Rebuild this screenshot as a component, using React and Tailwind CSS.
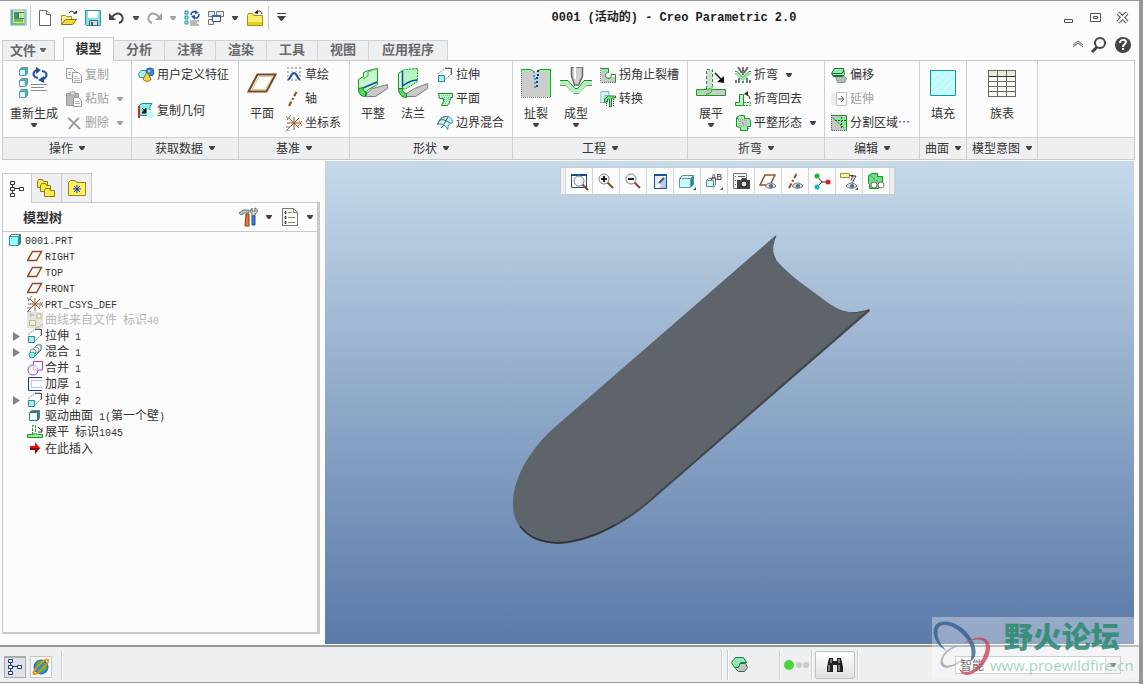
import React from 'react';

const Svg = ({ size = 16, children, className = "" }) => (
  <svg width={size} height={size} viewBox={`0 0 ${size} ${size}`} fill="none" aria-hidden="true" className={`shrink-0 ${className}`}>
    {children}
  </svg>
);

const Caret = ({ className = "text-[#454545]" }) => (
  <svg width="6" height="4" viewBox="0 0 6 4" aria-hidden="true" className={`shrink-0 ${className}`}>
    <path d="M0 0h6v1L4 4H2L0 1z" fill="currentColor" />
  </svg>
);

/* quick access icons */

const AppIcon = () => (
  <Svg size={17}>
    <path d="M0 0h17v17H0z" fill="#a7d5ee" />
    <path d="M1 1h2v15H1z" fill="#67a9c9" />
    <path d="M3 14h12v2H3z" fill="#74c65d" />
    <path d="M14 2h2v13h-2z" fill="#8fc7dc" />
    <path d="M3 2h11v12H3z" fill="#e9e45c" />
    <path d="M4 3h4v10H4z" fill="#3a9a6b" />
    <path d="M4 10h9v3H4z" fill="#6cc04f" />
    <path d="M7 3h7v7H7z" fill="#3a7b9d" />
    <path d="M9 4h5v5H9z" fill="#d5e871" />
  </Svg>
);

const NewIcon = () => (
  <Svg>
    <path d="M2.500.5h7l4 4v11h-11z" fill="#fff" stroke="#6a6a6a" />
    <path d="M9.500.5v4h4" fill="#e8e8e8" stroke="#6a6a6a" />
  </Svg>
);

const OpenIcon = () => (
  <Svg>
    <path d="M.5 14.500V5.500h4l1 1h5v3" fill="#fff3a0" stroke="#b08a1a" />
    <path d="M.5 14.500l4-5h11l-4 5z" fill="#f3d93c" stroke="#8f7012" />
    <path d="M8 3c2-3 5-2 6 1" stroke="#222" />
    <path d="M12 3.500h4v-3z" fill="#222" />
  </Svg>
);

const SaveIcon = () => (
  <Svg>
    <path d="M.5.5h15v15h-14l-1-1z" fill="#7de3ea" stroke="#3b8b98" />
    <path d="M3 1h10v7H3z" fill="#fff" />
    <path d="M4.500 10.500h8v5h-8z" fill="#d8dde0" stroke="#3f6d78" />
    <path d="M6 12h2v3H6z" fill="#3a5d68" />
  </Svg>
);

const UndoIcon = () => (
  <Svg>
    <path d="M3 7c3-4 8-5 10-1 2 3 0 6-3 7" stroke="currentColor" strokeWidth="2" />
    <path d="M0 3v7h7z" fill="currentColor" />
  </Svg>
);

const RegenIcon = () => (
  <Svg>
    <path d="M1 1h3v3H1zM1 6h3v3H1zM1 11h3v3H1z" fill="#aef5f5" stroke="#149a9a" />
    <path d="M6 11h9M6 13h7M6 15h9" stroke="#777" />
    <path d="M7 5c0-3 3-4 5-3M15 4c0 4-3 5-6 3" stroke="#1d50a8" strokeWidth="1.500" />
    <path d="M11 0l4 3-4 1zM11 5l-4 1 4 4z" fill="#1d50a8" />
  </Svg>
);

const WindowsIcon = () => (
  <Svg>
    <path d="M.5 1.500h6v5h-6zM8.500 1.500h7v5h-7zM.5 9.500h5v5h-5z" fill="#ececec" stroke="#777" />
    <path d="M4.500 5.500h8v6h-8z" fill="#fff" stroke="#244e99" />
    <path d="M4 5h9v2H4z" fill="#2e67bd" />
  </Svg>
);

const CloseFolderIcon = () => (
  <Svg>
    <path d="M.5 15.500v-10l1-2h4l1 2h9v10z" fill="#fdee67" stroke="#a88e17" />
    <path d="M1 12h14v3H1z" fill="#e9ca28" />
    <path d="M9 2c3-2 5-1 6 2" stroke="#222" />
    <path d="M7 3l4-3v4z" fill="#222" />
  </Svg>
);

/* large ribbon icons */

const cube = (x, y) => (
  <g key={`${x}-${y}`}>
    <path d={`M${x} ${y + 2}l2-2h6v6l-2 2z`} fill="#29c5c5" stroke="#7d8c8c" />
    <path d={`M${x} ${y + 2}h6v6H${x}z`} fill="#d3fbfb" stroke="#5a9a9a" />
  </g>
);

const BigRegen = () => (
  <Svg size={32}>
    {[0, 11, 22].map((y) => cube(1.5, y + 0.5))}
    <path d="M13 17.500h16M13 20.500h13M13 23.500h16" stroke="#8b8b8b" />
    <path d="M20 11c-6-1-6-7 0-8M24 4c6 1 6 6 0 9" stroke="#1d4e9e" strokeWidth="2" />
    <path d="M18 0l5 3-5 4zM26 9l-6 4 6 3z" fill="#1d4e9e" />
  </Svg>
);

const BigPlane = () => (
  <Svg size={32}>
    <path d="M11.500 7.500h18l-9 17h-18z" fill="#fdfdfd" stroke="#7a4520" strokeWidth="2" />
    <path d="M13 9.500h13.500l-7 13H6z" stroke="#d6c88e" />
  </Svg>
);

const BigFlat = () => (
  <Svg size={32}>
    <path d="M9.500 26.500l6-5 15-4v4l-12 8h-9z" fill="#c9c9c9" stroke="#7d7d7d" />
    <path d="M1.500 12.500l5-3V5.500l5-2 9-2v16l-9 5c-2 1-2 3-2 5h-3c-3-1-5-5-5-8z" fill="#c5f7cf" stroke="#129a1e" />
    <path d="M6 12l5-3V5l7-3" stroke="#40b34a" />
    <path d="M6 21l14-6" stroke="#1747a6" strokeWidth="1.500" />
    <path d="M1.500 21.500c0 5 2 8 7 8v-5c-2 0-3-2-2-4z" fill="#5ad768" stroke="#0d8a18" />
  </Svg>
);

const BigFlange = () => (
  <Svg size={32}>
    <path d="M9.500 26.500l8-5 13-5v5l-12 8h-9z" fill="#c9c9c9" stroke="#7d7d7d" />
    <path d="M1.500 6.500l6-4 13-1v13l-11 7-8 1z" fill="#b4f4c0" stroke="#129a1e" strokeDasharray="2 1" />
    <path d="M1.500 6.500l4-3v18h-4z" fill="#d5f9dc" stroke="#129a1e" />
    <path d="M5.500 4v15c4-3 9-6 15-6" stroke="#1747a6" strokeWidth="1.500" />
    <path d="M1.500 21.500h4c0 3 1 4 4 5v4c-5 0-8-4-8-9z" fill="#5ad768" stroke="#0d8a18" />
  </Svg>
);

const BigRip = () => (
  <Svg size={32}>
    <path d="M1 2h11l3 4 3-4h13v28H1z" fill="#cccccc" />
    <path d="M1 4h10M20 4h9v26" stroke="#a6eaae" strokeWidth="2" />
    <path d="M1 2.500h10l2 2M31 2.500H20l-2 2M30.500 2v28" stroke="#17a41f" />
    <path d="M1.500 4v26.500H30" stroke="#777" strokeDasharray="1 1" />
    <path d="M18 3v6h-1v13" stroke="#163e9c" strokeWidth="2" strokeDasharray="2 2" />
    <path d="M14 4v6h1v12" stroke="#35aab5" strokeWidth="2" strokeDasharray="2 2" />
  </Svg>
);

const BigForm = () => (
  <Svg size={32}>
    <path d="M0 18.500h6l8 8h5l7-8h6" stroke="#888" />
    <path d="M0 16h7l7 8h5l6-8h7" stroke="#b2f0bd" strokeWidth="4" />
    <path d="M0 13.500h8l7 8h3l6-8h8" stroke="#128f1b" />
    <path d="M11.500 0v9l3 9h4l4-9V0z" fill="#cfcfcf" stroke="#666" strokeWidth="1.500" />
    <path d="M15 0v12" stroke="#fff" strokeWidth="2" />
  </Svg>
);

const BigUnbend = () => (
  <Svg size={32}>
    <path d="M11.500 22V2.500h6V22" fill="#d8d8d8" stroke="#159d1d" strokeDasharray="3 2" />
    <path d="M1.500 22.500h10l5-1 1 1h13v6h-29z" fill="#cbcbcb" stroke="#159d1d" />
    <path d="M2 24.500h9c4 0 6-2 6-5" stroke="#8be595" strokeWidth="2" />
    <path d="M11 27c4 0 6-2 6-5" stroke="#159d1d" />
    <path d="M20 6l7 7" stroke="#111" strokeWidth="1.500" />
    <path d="M29 16v-7l-7 6z" fill="#111" />
  </Svg>
);

const BigFill = () => (
  <Svg size={32}>
    <path d="M3.500 3.500h25v25h-25z" fill="#bdfbfb" stroke="#11989f" />
    <path d="M5 12l8-8M5 20L21 4M5 27L28 5M12 28l16-16M20 28l8-8" stroke="#eaffff" />
  </Svg>
);

const BigTable = () => (
  <Svg size={32}>
    <path d="M2.500 3.500h27v26h-27z" fill="#fafaf2" stroke="#333" />
    <path d="M2 4h28v5H2z" fill="#e9e9d8" />
    <path d="M2.500 3.500h27v26h-27zM11.500 4v26M20.500 4v26M3 14.500h27M3 19.500h27M3 24.500h27" stroke="#686868" />
    <path d="M3 9.500h27" stroke="#333" />
  </Svg>
);

/* small ribbon icons */

const CopyIcon = () => (
  <Svg>
    <path d="M.5 1.500h6l3 3v7h-9z" fill="#f4f4f4" stroke="#a4a4a4" />
    <path d="M6.500 5.500h6l3 3v7h-9z" fill="#fff" stroke="#9a9a9a" />
    <path d="M8 9.500h4M8 11.500h6M8 13.500h6M2 5.500h3M2 7.500h3" stroke="#b5b5b5" />
  </Svg>
);

const PasteIcon = () => (
  <Svg>
    <path d="M.5 2.500h12v12H.5z" fill="#b9b9b9" stroke="#999" />
    <path d="M4 1h5v3H4z" fill="#e5e5e5" stroke="#999" />
    <path d="M7.500 6.500h5l3 3v6h-8z" fill="#fff" stroke="#9a9a9a" />
    <path d="M9 10.500h4M9 12.500h5" stroke="#b5b5b5" />
  </Svg>
);

const DeleteIcon = () => (
  <Svg>
    <path d="M2 3c4 3 8 7 12 11M13 3C9 6 6 10 3 14" stroke="#9b9b9b" strokeWidth="2" />
  </Svg>
);

const UdfIcon = () => (
  <Svg>
    <path d="M.5 6.500l3-3h6v5l-2 2h-6z" fill="#b1f2ea" stroke="#2a9d94" />
    <circle cx="12" cy="5" r="4" fill="#3c86dd" stroke="#1f5cad" />
    <circle cx="11" cy="4" r="1" fill="#d8ecff" />
    <path d="M9 5l4 7c0 3-7 3-8 0z" fill="#f3d550" stroke="#8e701a" />
  </Svg>
);

const CopyGeomIcon = () => (
  <Svg>
    <path d="M1 2.500l3-2h10l-2 3v9H1z" fill="#7ff0ee" stroke="#208e8e" />
    <path d="M0 3h2v12H0z" fill="#d32a20" />
    <path d="M4 5l4 4M8 5v5H4z" fill="#111" stroke="#111" />
    <path d="M9.500 7.500h6v8h-6z" fill="#baffff" stroke="#fff" />
  </Svg>
);

const SketchIcon = () => (
  <Svg>
    <path d="M1 1h15M1 5h15M1 9h15M1 13h15" stroke="#b5b5b5" strokeWidth="2" strokeDasharray="2 2" />
    <path d="M2 13c3-2 3-7 6-7s3 5 6 7" stroke="#fcfcfc" strokeWidth="4" />
    <path d="M2 13c3-2 3-7 6-7s3 5 6 7" stroke="#164f9e" strokeWidth="2" />
  </Svg>
);

const AxisIcon = () => (
  <Svg>
    <path d="M3 15L11 0" stroke="#8d4617" strokeWidth="2" strokeDasharray="5 2 2 2" />
  </Svg>
);

const CsysIcon = () => (
  <Svg>
    <path d="M8 2v13M1 8h12M3 3l10 10M13 3L3 13" stroke="#a0531e" />
    <path d="M0 1l2 3M5 0L1 5M13 6l3 5M16 6l-4 5M0 12h4l-4 4h4" stroke="#777" />
  </Svg>
);

const ExtrudeIcon = () => (
  <Svg>
    <path d="M1 7l7-6h6v6l-7 7" fill="#fff" stroke="#8a8a8a" strokeDasharray="2 1" />
    <path d="M8 1.500h6.500v6" stroke="#555" />
    <path d="M1.500 8.500h6v6h-6z" fill="#9ff5f5" stroke="#3a8189" />
  </Svg>
);

const GreenPlaneIcon = () => (
  <Svg>
    <path d="M1.500 2.500h14v4h-2l-1 5-2 3h-6l2-4v-3h-4z" fill="#c5f5cf" stroke="#108b1c" />
    <path d="M4 4.500h10M5 6.500h8M7 8.500h5M7 10.500h4M6 12.500h4" stroke="#5dc972" strokeDasharray="1 1" />
  </Svg>
);

const BlendIcon = () => (
  <Svg>
    <path d="M.5 9.500C2 5 5 2 8 1.500c4-1 7 2 7.500 6C12 8 11 11 10.500 14.500 9 11 6 8 .5 9.500z" fill="#bef7f7" stroke="#3292a5" />
    <path d="M3 5c4-1 7 1 10 3M7 9l4-7M.5 9.500C2 5 5 2 8 1.500M4 13l3-3" stroke="#555" />
  </Svg>
);

const CornerReliefIcon = () => (
  <Svg>
    <path d="M1 1h8v4c-4 0-4 5 0 5h7v6H1z" fill="#c8c8c8" />
    <path d="M2 3h5" stroke="#8ae89b" strokeWidth="2" />
    <path d="M0 1.500h8.500v4M9 5.500c-5 0-5 6 0 6 3 0 2-4 2-4h4.500v8" stroke="#129a1e" />
    <path d="M.5 3v12.500H15" stroke="#777" strokeDasharray="1 1" />
  </Svg>
);

const ConvertIcon = () => (
  <Svg>
    <path d="M0 1.500l2-1h7v4H5v7H0z" fill="#c5f7f8" stroke="#9aa9a9" />
    <path d="M4.500 11V8l4-3h7v2h-4v9h-2V8h-2v3z" fill="#8fe59a" stroke="#108b1c" />
    <path d="M6.500 10v5M13.500 8v7" stroke="#1e3f9c" strokeDasharray="1 1" />
  </Svg>
);

const BendIcon = () => (
  <Svg>
    <path d="M3 0l4 6M13 0L9 6" stroke="#666" strokeWidth="2" />
    <path d="M0 4.500h2l6 6 6-6h2" stroke="#129a1e" />
    <path d="M0 7h2l6 6 6-6h2" stroke="#8ee29a" strokeWidth="2" />
    <path d="M1 13v3M4 11v5M8 0v8M8 14v2M12 11v5M15 13v3" stroke="#777" strokeWidth="2" />
  </Svg>
);

const BendBackIcon = () => (
  <Svg>
    <path d="M4.500 3.500h4v11h-8v-3h4z" fill="#bdf0c4" stroke="#129a1e" />
    <path d="M9 11.500h6.500v3H9" stroke="#129a1e" strokeDasharray="2 1" />
    <path d="M11 3c2 0 3 2 4 5" stroke="#222" />
    <path d="M9 3l4-3v5z" fill="#222" />
  </Svg>
);

const FlatPatternIcon = () => (
  <Svg>
    <path d="M1.500 2.500l3-2h5v3h5l1 3v5h-3v4h-7v-3l-4-1z" fill="#a9e8b0" stroke="#129a1e" />
    <path d="M5 5h6v6H5z" fill="#cfcfcf" stroke="#888" strokeDasharray="1 1" />
    <path d="M2 3l12 11" stroke="#1747a6" strokeDasharray="2 5" />
  </Svg>
);

const OffsetIcon = () => (
  <Svg>
    <path d="M4.500 9.500h9l2 2-2 4h-7z" fill="#b9b9b9" stroke="#6fa57a" />
    <path d="M3.500 1.500h9l1 6-2 2h-9l-2-3z" fill="#9fecb1" stroke="#10762a" />
    <path d="M1 6.500h10l2-4M2 8.500h10" stroke="#10762a" />
  </Svg>
);

const ExtendIcon = () => (
  <Svg>
    <path d="M0 2h6v12H0z" fill="#ececec" />
    <path d="M5.500 1.500h10v13h-10z" fill="#fff" stroke="#c0c0c0" />
    <path d="M7 8h6M10 5l3 3-3 3" stroke="#5a5a5a" />
  </Svg>
);

const SplitIcon = () => (
  <Svg>
    <path d="M0 0h16v16H0z" fill="#c6c6c6" />
    <path d="M3 3h12v12z" fill="#8fe59a" />
    <path d="M0 .5h15.500V16" stroke="#129a1e" />
    <path d="M2 3l11 10M4 5.500h11M10.500 2v12" stroke="#11711a" strokeDasharray="2 1" />
    <path d="M.5 2v13.500H14" stroke="#666" strokeDasharray="1 1" />
  </Svg>
);

/* model tree icons */

const SmallPlane = () => (
  <Svg><path d="M5.500 3.500h9l-5 9h-9z" fill="#fff" stroke="#8d4a1c" strokeWidth="1.500" /></Svg>
);

const PartIcon = () => (
  <Svg size={14}>
    <path d="M1.500 3.500l2-2h9v9l-2 2" fill="#128a92" stroke="#577" />
    <path d="M1.500 3.500l2-2h9l-2 2z" fill="#fff" stroke="#577" />
    <path d="M1.500 3.500h9v9h-9z" fill="#95fbfb" stroke="#2d9aa0" />
  </Svg>
);

const CurveFileIcon = () => (
  <Svg>
    <path d="M0 0h16v16H0z" fill="#e2e2df" />
    <path d="M2.500 8.500h6v5h-6zM10 2h4v4h-4zM2 3h5M4 1v4M8 15h4l4-3" fill="#f7f4dc" stroke="#b9b6a0" />
  </Svg>
);

const TreeBlend = () => (
  <Svg>
    <path d="M8 3l2-2h4v5l-6 6" fill="#fff" stroke="#2d7f86" />
    <circle cx="9" cy="6" r="3" fill="#fff" stroke="#888" />
    <circle cx="6" cy="8" r="3" fill="#fff" stroke="#888" />
    <circle cx="5" cy="11" r="3" fill="#8df6f8" stroke="#2e99a0" />
  </Svg>
);

const MergeIcon = () => (
  <Svg>
    <path d="M6.500 5V1.500h9v8.500H11" stroke="#a33fe0" />
    <path d="M6.500 5v5H11c0-3-2-5-4.500-5z" fill="#f5ecfc" stroke="#d3b6f0" />
    <path d="M6.500 5C3 5 1 7 1 10s2 5 5 5 5-2 5-5" stroke="#a33fe0" />
  </Svg>
);

const ThickenIcon = () => (
  <Svg>
    <path d="M15 1.500H1.500v13H15" stroke="#123c94" />
    <path d="M15 4.500H4.500v7H15" stroke="#bcbcf4" />
  </Svg>
);

const SurfaceIcon = () => (
  <Svg>
    <path d="M2.500 4.500l2-2h8v8l-2 2" fill="#128a92" stroke="#777" />
    <path d="M2.500 4.500h8v8h-8z" fill="#efffff" stroke="#3b7c80" />
  </Svg>
);

const TreeUnbend = () => (
  <Svg>
    <path d="M5.500 11V1.500h3V11" fill="#fff" stroke="#129a1e" strokeDasharray="3 1" />
    <path d="M.5 10.500h5l3-1 2 1h5v3H.5z" fill="#9fe3a8" stroke="#129a1e" />
    <path d="M11 3l4 4M15 4v4h-4" stroke="#444" />
  </Svg>
);

const InsertArrow = () => (
  <Svg>
    <path d="M3 6h5V2l5 6-5 6v-4H3z" fill="#e90c0c" />
    <path d="M3 8h10l-5 6v-4H3z" fill="#950505" />
  </Svg>
);

const TreeTabIcon = ({ color = "#333", fill = "#fff" }) => (
  <Svg>
    <path d="M3.500 3v11M4 7.500h8" stroke={color} />
    <path d="M1.500.5h4v3h-4zM1.500 6.500h4v3h-4zM1.500 12.500h4v3h-4zM10.500 6.500h4v3h-4z" fill={fill} stroke={color} />
  </Svg>
);

const FolderShape = ({ x, y }) => (
  <path d={`M${x}.5 ${y + 8}.5v-6l1-2h4l1 2h4v6z`} fill="#fbea4c" stroke="#8f7912" />
);

const FoldersIcon = () => (
  <Svg size={19}>
    <FolderShape x={0} y={0} />
    <FolderShape x={3} y={4} />
    <FolderShape x={7} y={9} />
  </Svg>
);

const FavoriteFolder = () => (
  <Svg size={18}>
    <path d="M.5 16.500V3.500l2-2h5l1 2h9v13z" fill="#fdf069" stroke="#9d8616" />
    <path d="M9 6v8M5 10h8M6 7l6 6M12 7l-6 6" stroke="#12359b" />
  </Svg>
);

const ToolsIcon = () => (
  <Svg size={20}>
    <path d="M0 6l4-3h6v3H6L2 8z" fill="#b3c3c3" stroke="#6a7d7d" />
    <path d="M7 7h3v12H6z" fill="#e57928" stroke="#8a3c10" />
    <path d="M11 4l2-3v3h3V1c3 1 3 5 0 6v2h-3V7z" fill="#d5d5d5" stroke="#666" />
    <path d="M13 9h3v9h-3z" fill="#3c7fe0" stroke="#23519b" />
  </Svg>
);

const ListIcon = () => (
  <Svg size={18}>
    <path d="M1.500.5h11l4 4v13h-15z" fill="#fffdf1" stroke="#777" />
    <path d="M12.500.5v4h4M7 4.500h4M7 9.500h7M7 14.500h7" stroke="#888" />
    <path d="M4 3.500h1v2H4zM4 8.500h1v2H4zM4 13.500h1v2H4z" stroke="#333" />
  </Svg>
);

/* view toolbar icons */

const Lens = ({ cx, cy, sign }) => (
  <g>
    <path d={`M${cx + 3} ${cy + 3}l6 6`} stroke="#7a4a35" strokeWidth="2" />
    <circle cx={cx} cy={cy} r="5" fill="#f5f9fb" stroke="#7e8588" />
    {sign && <path d={sign} stroke="#222" strokeWidth="2" />}
  </g>
);

const Eye = () => (
  <g>
    <path d="M6 14c3-4 8-4 11 0-3 3-8 3-11 0z" fill="#d8d8d8" stroke="#777" />
    <circle cx="12" cy="14" r="2" fill="#496c92" />
  </g>
);

const Flyout = () => <path d="M18 15v3h-3z" fill="#555" />;

const viewTools = [
  { label: "重新调整", icon: <><path d="M1.500 2.500h15v13h-15z" fill="#fff" stroke="#1d4793" /><path d="M1 3h16" stroke="#1d4793" strokeWidth="2" /><Lens cx={9} cy={9} /></> },
  { label: "放大", icon: <Lens cx={7} cy={7} sign="M4 7h6M7 4v6" /> },
  { label: "缩小", icon: <Lens cx={7} cy={7} sign="M4 7h6" /> },
  { label: "重画", icon: <><path d="M3.500 2.500h12v14h-12z" fill="#e4f0fc" stroke="#1d4fa5" /><path d="M3 3h13" stroke="#1d4fa5" strokeWidth="2" /><path d="M5 12l10-7v11H5z" fill="#b7cdea" /><path d="M8 11l5-5" stroke="#555" strokeWidth="2" /><path d="M5 13l3-2 2 2-2 3H5z" fill="#fff" /></> },
  { label: "显示样式", icon: <><path d="M1.500 6.500l3-3h11v9l-3 3" fill="#0f98a0" stroke="#688" /><path d="M1.500 6.500l3-3h11l-3 3z" fill="#e7ffff" stroke="#689" /><path d="M1.500 6.500h11v9h-11z" fill="#caffff" stroke="#6a9ba0" /><Flyout /></> },
  { label: "已保存方向", icon: <><path d="M1.500 8.500l2-2h7v6l-2 3" fill="#fff" stroke="#777" /><path d="M1.500 8.500h7v6h-7z" fill="#e5ffff" stroke="#379aa0" /><text x="6" y="8" fontSize="9" fontFamily="Liberation Mono, monospace" fill="#222">AB</text><Flyout /></> },
  { label: "视图管理器", icon: <><path d="M1.500 1.500h13v15h-13z" fill="#f4f4f4" stroke="#777" /><path d="M3 4.500h1M6 4.500h7M3 8.500h1M3 12.500h1" stroke="#555" /><path d="M5 8h4l1-2h4l1 2h3v9H5z" fill="#444" /><circle cx="12" cy="12" r="3" fill="#ddd" stroke="#111" /></> },
  { label: "平面显示", icon: <><path d="M6 3h10l-5 10H1z" fill="#fff" stroke="#91502c" strokeWidth="1.500" /><Eye /></> },
  { label: "轴显示", icon: <><path d="M3 16L11 1" stroke="#91502c" strokeWidth="2" strokeDasharray="5 2 2 2" /><Eye /></> },
  { label: "坐标系显示", icon: <><path d="M4 4l5 6h6M9 10l-5 5" stroke="#333" /><circle cx="4" cy="4" r="2.500" fill="#16ba22" /><circle cx="15" cy="10" r="2.500" fill="#e31d1d" /><circle cx="4" cy="15" r="2.500" fill="#13b9c6" /></> },
  { label: "注释显示", icon: <><path d="M.5 1.500h9v4h-9z" fill="#fbf596" stroke="#96903f" /><path d="M10 3.500h3l-2 5M11 4h5l-4 7" stroke="#333" /><Eye /><Flyout /></> },
  { label: "平整形态预览", icon: <><path d="M1.500 3.500l3-2h6v3h5v8h-4v4h-9v-4l-1-1z" fill="#6fda85" stroke="#129a1e" /><path d="M3 3l12 11" stroke="#2d7042" strokeDasharray="1 1" /><circle cx="7" cy="13" r="3" fill="#fff" stroke="#777" /><circle cx="14" cy="13" r="3" fill="#fff" stroke="#777" /></> },
];

const ribbon = [
  {
    title: "操作",
    width: "w-[129px]",
    large: [{ label: "重新生成", icon: <BigRegen />, menu: true, wide: true }],
    small: [
      { label: "复制", icon: <CopyIcon />, disabled: true },
      { label: "粘贴", icon: <PasteIcon />, disabled: true, menu: true },
      { label: "删除", icon: <DeleteIcon />, disabled: true, menu: true },
    ],
  },
  {
    title: "获取数据",
    width: "w-[107px]",
    roomy: true,
    small: [
      { label: "用户定义特征", icon: <UdfIcon /> },
      { label: "复制几何", icon: <CopyGeomIcon /> },
    ],
  },
  {
    title: "基准",
    width: "w-[111px]",
    large: [{ label: "平面", icon: <BigPlane /> }],
    small: [
      { label: "草绘", icon: <SketchIcon /> },
      { label: "轴", icon: <AxisIcon /> },
      { label: "坐标系", icon: <CsysIcon /> },
    ],
  },
  {
    title: "形状",
    width: "w-[163px]",
    large: [{ label: "平整", icon: <BigFlat /> }, { label: "法兰", icon: <BigFlange /> }],
    small: [
      { label: "拉伸", icon: <ExtrudeIcon /> },
      { label: "平面", icon: <GreenPlaneIcon /> },
      { label: "边界混合", icon: <BlendIcon /> },
    ],
  },
  {
    title: "工程",
    width: "w-[175px]",
    large: [{ label: "扯裂", icon: <BigRip />, menu: true }, { label: "成型", icon: <BigForm />, menu: true }],
    small: [
      { label: "拐角止裂槽", icon: <CornerReliefIcon /> },
      { label: "转换", icon: <ConvertIcon /> },
    ],
  },
  {
    title: "折弯",
    width: "w-[137px]",
    large: [{ label: "展平", icon: <BigUnbend />, menu: true }],
    small: [
      { label: "折弯", icon: <BendIcon />, menu: true },
      { label: "折弯回去", icon: <BendBackIcon /> },
      { label: "平整形态", icon: <FlatPatternIcon />, menu: true },
    ],
  },
  {
    title: "编辑",
    width: "w-[95px]",
    small: [
      { label: "偏移", icon: <OffsetIcon /> },
      { label: "延伸", icon: <ExtendIcon />, disabled: true },
      { label: "分割区域⋯", icon: <SplitIcon /> },
    ],
  },
  { title: "曲面", width: "w-[47px]", large: [{ label: "填充", icon: <BigFill /> }] },
  { title: "模型意图", width: "w-[71px]", centered: true, large: [{ label: "族表", icon: <BigTable /> }] },
];

const tree = [
  { label: "RIGHT", icon: <SmallPlane /> },
  { label: "TOP", icon: <SmallPlane /> },
  { label: "FRONT", icon: <SmallPlane /> },
  { label: "PRT_CSYS_DEF", icon: <CsysIcon /> },
  { label: "曲线来自文件 标识40", icon: <CurveFileIcon />, muted: true },
  { label: "拉伸 1", icon: <ExtrudeIcon />, expandable: true },
  { label: "混合 1", icon: <TreeBlend />, expandable: true },
  { label: "合并 1", icon: <MergeIcon /> },
  { label: "加厚 1", icon: <ThickenIcon /> },
  { label: "拉伸 2", icon: <ExtrudeIcon />, expandable: true },
  { label: "驱动曲面 1(第一个壁)", icon: <SurfaceIcon /> },
  { label: "展平 标识1045", icon: <TreeUnbend /> },
  { label: "在此插入", icon: <InsertArrow /> },
];

const LargeButton = ({ label, icon, menu, wide }) => (
  <button className={`flex shrink-0 flex-col items-center pt-1 ${wide ? "w-14" : "w-10"}`}>
    {icon}
    <span className="mt-[6px] h-4 leading-4 whitespace-nowrap">{label}</span>
    {menu && <Caret className="mt-[2px] text-[#454545]" />}
  </button>
);

const SmallButton = ({ label, icon, menu, disabled }) => (
  <button disabled={disabled} className="flex h-6 items-center gap-[3px] pb-px whitespace-nowrap disabled:text-[#a0a0a0]">
    {icon}
    <span className="pb-px">{label}</span>
    {menu && <Caret className={disabled ? "ml-[5px] text-[#a0a0a0]" : "ml-[5px] text-[#454545]"} />}
  </button>
);

const RibbonGroup = ({ title, width, large = [], small = [], roomy, centered }) => (
  <section className={`flex shrink-0 flex-col border-r border-[#cdd0d3] ${width}`}>
    <div className={`flex h-[77px] pt-[2px] ${centered ? "justify-center" : "pl-[3px]"}`}>
      {large.map((item) => <LargeButton key={item.label} {...item} />)}
      {small.length > 0 && (
        <div className={`flex flex-col ${large.length ? "ml-1" : "ml-[3px]"} ${roomy ? "gap-3" : ""}`}>
          {small.map((item) => <SmallButton key={item.label} {...item} />)}
        </div>
      )}
    </div>
    <button className="flex h-[22px] items-center justify-center gap-[6px] border-t border-[#cdd0d3] bg-[#eeeff1] pb-[2px] whitespace-nowrap">
      {title}
      <Caret />
    </button>
  </section>
);

// Latin runs are set in the narrower monospaced face
const MixedText = ({ text }) => (
  <span className="whitespace-pre">
    {text.split(/([\x20-\x7e]+)/).filter(Boolean).map((part, i) =>
      /^[\x20-\x7e]/.test(part)
        ? <span key={i} className="font-['Liberation_Mono',monospace] text-[10px]">{part}</span>
        : part
    )}
  </span>
);

const ToolButton = ({ label, children, className = "w-6" }) => (
  <button aria-label={label} className={`flex h-6 shrink-0 items-center justify-center ${className}`}>{children}</button>
);

const TitleBar = () => (
  <header className="flex h-[33px] items-center pl-[6px]">
    <ToolButton label="Creo"><AppIcon /></ToolButton>
    <span className="mr-[2px] h-6 w-px bg-[#c9c9c9]" />
    <ToolButton label="新建"><NewIcon /></ToolButton>
    <ToolButton label="打开"><OpenIcon /></ToolButton>
    <ToolButton label="保存"><SaveIcon /></ToolButton>
    <ToolButton label="撤消" className="w-6 text-[#444]"><UndoIcon /></ToolButton>
    <ToolButton label="撤消列表" className="w-[14px]"><Caret /></ToolButton>
    <ToolButton label="重做" className="w-[22px] text-[#a3a3a3]"><span className="-scale-x-100"><UndoIcon /></span></ToolButton>
    <ToolButton label="重做列表" className="w-4"><Caret className="text-[#a3a3a3]" /></ToolButton>
    <ToolButton label="重新生成" className="w-[22px]"><RegenIcon /></ToolButton>
    <ToolButton label="窗口" className="w-[26px]"><WindowsIcon /></ToolButton>
    <ToolButton label="窗口列表" className="w-3"><Caret /></ToolButton>
    <ToolButton label="关闭" className="w-[27px]"><CloseFolderIcon /></ToolButton>
    <span className="h-6 w-px bg-[#c9c9c9]" />
    <ToolButton label="自定义">
      <svg width="9" height="9" viewBox="0 0 9 9" aria-hidden="true"><path d="M0 0h9v1H0zM0 3h9L5 8H4z" fill="#444" /></svg>
    </ToolButton>
    <h1 className="flex-1 text-center font-['Liberation_Mono','Noto_Sans_CJK_SC',monospace] text-xs font-bold text-[#222]">
      0001 (活动的) - Creo Parametric 2.0
    </h1>
    <div className="flex pr-[3px]">
      <ToolButton label="最小化" className="w-[27px]">
        <Svg><path d="M3.500 9.500h8v3h-8z" stroke="#555" /></Svg>
      </ToolButton>
      <ToolButton label="还原" className="w-[27px]">
        <Svg><path d="M2.500 3.500h10v8h-10zM5.500 6.500h4v2h-4z" stroke="#555" /></Svg>
      </ToolButton>
      <ToolButton label="关闭窗口" className="w-[27px]">
        <Svg>
          <path d="M3 3l9 9M12 3l-9 9" stroke="#555" strokeWidth="4" />
          <path d="M3 3l9 9M12 3l-9 9" stroke="#fcfcfc" strokeWidth="2" />
        </Svg>
      </ToolButton>
    </div>
  </header>
);

const tabs = ["分析", "注释", "渲染", "工具", "视图", "应用程序"];

const TabBar = () => (
  <nav className="flex h-[26px] items-end pl-[2px] text-[13px] font-bold text-[#68696d]">
    <button className="flex h-[20px] w-[53px] items-center gap-1 border border-b-0 border-[#c6cacd] bg-[#eeeff1] pb-[2px] pl-[7px]">
      文件 <Caret className="text-[#68696d]" />
    </button>
    <button className="z-10 -mb-px ml-2 h-[24px] w-[51px] border border-b-0 border-[#c6cacd] bg-[#fcfcfc] pb-1 leading-4 text-[#333]">模型</button>
    {tabs.map((tab) => (
      <button key={tab} className="h-[20px] min-w-[51px] border-t border-r border-[#d0d3d6] bg-[#eeeff1] px-3 pb-1 leading-4 last-of-type:px-[13px]">{tab}</button>
    ))}
    <div className="mr-1 ml-auto flex items-center self-center pb-1">
      <ToolButton label="最小化功能区" className="w-[18px]">
        <Svg><path d="M3 8l5-4 5 4M3 10l5-4 5 4" stroke="#555" /></Svg>
      </ToolButton>
      <ToolButton label="搜索">
        <Svg>
          <path d="M1 15l5-5" stroke="#444" strokeWidth="3" />
          <circle cx="9" cy="6" r="5" fill="#fcfcfc" stroke="#444" strokeWidth="2" />
        </Svg>
      </ToolButton>
      <ToolButton label="帮助">
        <Svg>
          <circle cx="8" cy="8" r="8" fill="#444" />
          <path d="M5 6c0-4 6-4 6-1 0 2-3 2-3 5" stroke="#fff" strokeWidth="2" />
          <path d="M7 11h2v2H7z" fill="#fff" />
        </Svg>
      </ToolButton>
    </div>
  </nav>
);

const ModelTree = () => (
  <aside className="mt-3 mb-[11px] ml-[2px] flex w-[318px] shrink-0 flex-col">
    <div className="flex h-[29px]">
      <button aria-label="模型树" className="z-10 -mb-px flex w-[30px] items-center justify-center border border-b-0 border-[#c6cacd] bg-[#fcfcfc]"><TreeTabIcon /></button>
      <button aria-label="文件夹浏览器" className="flex w-[30px] items-center justify-center border-t border-r border-[#c6cacd] bg-[#eeeff1]"><FoldersIcon /></button>
      <button aria-label="收藏夹" className="flex w-[30px] items-center justify-center border-t border-r border-[#c6cacd] bg-[#eeeff1]"><FavoriteFolder /></button>
    </div>
    <div className="flex-1 border-t border-r-3 border-b-2 border-l border-[#c6cacd]">
      <div className="flex h-[29px] items-center border-b border-[#c6cacd] pl-5">
        <h2 className="flex-1 text-[13px] font-bold">模型树</h2>
        <ToolButton label="设置"><ToolsIcon /></ToolButton>
        <ToolButton label="设置列表" className="w-4"><Caret /></ToolButton>
        <ToolButton label="显示" className="w-[26px]"><ListIcon /></ToolButton>
        <ToolButton label="显示列表" className="w-[14px]"><Caret /></ToolButton>
      </div>
      <div className="flex h-4 items-center gap-[3px] pl-[5px]">
        <PartIcon />
        <MixedText text="0001.PRT" />
      </div>
      <ul>
        {tree.map((node) => (
          <li key={node.label} className={`flex h-4 items-center pl-[9px] leading-4 ${node.muted ? "text-[#b5b5b5]" : ""}`}>
            <span className="flex w-[15px]">
              {node.expandable && (
                <button aria-label="展开">
                  <svg width="8" height="9" viewBox="0 0 8 9" aria-hidden="true"><path d="M1 0l7 4.500L1 9z" fill="#858585" /></svg>
                </button>
              )}
            </span>
            {node.icon}
            <span className="ml-[2px]"><MixedText text={node.label} /></span>
          </li>
        ))}
      </ul>
    </div>
  </aside>
);

const Viewport = () => (
  <main className="relative mr-[5px] mb-px ml-[5px] flex-1 bg-linear-to-b from-[#c5d9e9] to-[#5b7aa8]">
    <div className="absolute inset-x-0 top-[6px] z-10 flex justify-center pr-1">
      <div className="flex h-[28px] border border-[#c9cdd2] bg-[#eeeff1] px-1">
        {viewTools.map((tool) => (
          <button key={tool.label} aria-label={tool.label} className="flex w-[27px] items-center justify-center border-l border-[#d2d5d9] bg-[#fcfcfc] last:w-[28px] last:border-r">
            <Svg size={19}>{tool.icon}</Svg>
          </button>
        ))}
      </div>
    </div>
    <svg viewBox="325 161 809 483" className="absolute inset-0 h-full w-full" role="img" aria-label="0001.PRT">
      <path d="M776 235C771 244 771 254 777 261C790 276 807 287 823 299C838 311 851 316 869 309L870 311L653 499C627 522 593 543 558 544C540 543 529 539 520 527C514 519 513 511 513 502C514 474 534 445 555 427Z" fill="#5f646b" />
      <path d="M869 310L653 498C627 521 593 541 558 543C541 542 529 538 520 526" fill="none" stroke="#44474b" strokeWidth="2" />
      <path d="M615 525C597 535 577 542 558 543C541 542 529 538 520 526" fill="none" stroke="#292b2d" />
      <path d="M776 236C772 244 771 253 776 260M851 313C858 313 864 311 869 310" fill="none" stroke="#484c50" />
    </svg>
  </main>
);

const Divider = () => <span className="h-[30px] w-[2px] border-r border-l border-r-white border-l-[#cccfd2]" />;

const StatusBar = () => (
  <footer className="flex h-[38px] shrink-0 items-center border-t-2 border-b border-[#979797] bg-[#eeeff1] pl-1">
    <button aria-label="导航器" className="mt-1 mr-1 flex size-[22px] items-center justify-center border border-t-2 border-[#a9abad] bg-[#e1e2e6]">
      <TreeTabIcon color="#173a7e" />
    </button>
    <button aria-label="浏览器" className="mt-1 mr-[9px] flex size-[22px] items-center justify-center border border-[#c6c8ca] bg-[#fafafa]">
      <Svg size={18}>
        <circle cx="9" cy="9" r="7" fill="#258edd" stroke="#175c9a" />
        <path d="M4 5l4-3 3 2-3 3-3 2zM9 9l4-4 2 4-3 5zM3 10l4 1 1 4z" fill="#45b638" />
        <path d="M2 16C-1 14 13-1 16 2c2 2-10 15-14 14z" stroke="#d99a0c" strokeWidth="2" />
      </Svg>
    </button>
    <Divider />
    <div className="ml-auto flex items-center">
      <Divider />
      <span className="ml-1 flex"><Divider /></span>
      <button aria-label="重新生成状态" className="mr-[31px] ml-[2px]">
        <Svg size={17}>
          <path d="M5.500 7.500h9l2 4-3 4h-6l-3-3z" fill="#c3c3c3" stroke="#2d6b48" />
          <path d="M4.500 1.500h8l3 5h-6l-2 5h-4l-3-5z" fill="#8ee9b2" stroke="#17804a" />
        </Svg>
      </button>
      <Divider />
      <svg width="27" height="12" viewBox="0 0 27 12" aria-hidden="true" className="mr-px ml-[2px]">
        <circle cx="6" cy="6" r="5" fill="#4ad53f" />
        <circle cx="16" cy="6" r="3" fill="#c9cbcc" />
        <circle cx="23" cy="6" r="3" fill="#c9cbcc" />
      </svg>
      <Divider />
      <button aria-label="查找" className="mx-[2px] flex h-[28px] w-10 items-center justify-center rounded-xs border border-[#bfc1c4] bg-linear-to-b from-white to-[#dfe0e2]">
        <Svg size={18}>
          <path d="M3 2h4v3h4V2h4l2 9v5h-6V9H7v7H1v-5z" fill="#222" />
          <path d="M3 9v6M13 9v6M5 3v4M13 3v4" stroke="#d1d1c8" />
        </Svg>
      </button>
      <Divider />
      <div className="mr-[18px] ml-24 grid items-center">
        <select aria-label="选择过滤器" className="col-start-1 row-start-1 h-[18px] w-[166px] appearance-none border border-[#b3b7ba] bg-[#fcfcfc] pl-1 text-xs leading-4 text-[#222]">
          <option>智能</option>
        </select>
        <span className="pointer-events-none col-start-1 row-start-1 mr-px flex h-4 w-[15px] items-center justify-center justify-self-end border-l border-[#c6cacd] bg-[#eeeff1]"><Caret /></span>
      </div>
    </div>
  </footer>
);

const Watermark = () => (
  <div className="pointer-events-none absolute right-0 bottom-[5px] z-20 flex h-[62px] w-[207px] bg-white/35 pr-[6px]">
    <svg width="58" height="62" viewBox="0 0 58 62" aria-hidden="true" className="shrink-0 opacity-75">
      <path fillRule="evenodd" fill="#2a5a8c" d="M3 9C8 1 26 4 36 17c9 11 10 23 3 27-2-1 5-10-5-23C25 9 11 5 7 10c-4 6 0 17 8 24C4 29-1 17 3 9z" />
      <path fill="#8e9cb0" d="M28 29C14 32 8 43 12 47c3 4 13 0 19-6-7 9-17 12-21 8-5-6 5-21 18-20z" />
      <path fill="#c73e54" d="M31 27c12-9 25-9 27 2 1 11-9 26-22 29-5 0-8-2-9-7 5 7 15 4 21-5 6-10 8-20 3-22-5-3-12-1-20 3z" />
    </svg>
    <div className="flex flex-1 flex-col items-center">
      <span className="h-10 font-['Noto_Sans_CJK_SC',sans-serif] text-[29px] leading-9 font-black whitespace-nowrap text-[#2c8b72]/90">野火论坛</span>
      <span className="font-['Open_Sans',sans-serif] text-[15px] leading-4 whitespace-nowrap text-[#8cc9b9]/80">www.proewildfire.cn</span>
    </div>
  </div>
);

export default function App() {
  return (
    <div className="relative flex min-h-screen flex-col border-t border-r-4 border-[#979797] bg-[#fcfcfc] pb-px font-['Noto_Sans_CJK_SC',sans-serif] text-xs text-[#333]">
      <TitleBar />
      <TabBar />
      <div className="mr-1 ml-[2px] flex h-[100px] border border-[#c6cacd]">
        {ribbon.map((group) => <RibbonGroup key={group.title} {...group} />)}
        <div className="flex flex-1 flex-col justify-end">
          <div className="h-[22px] border-t border-[#cdd0d3] bg-[#eeeff1]" />
        </div>
      </div>
      <div className="mt-px flex flex-1">
        <ModelTree />
        <Viewport />
      </div>
      <StatusBar />
      <Watermark />
    </div>
  );
}
